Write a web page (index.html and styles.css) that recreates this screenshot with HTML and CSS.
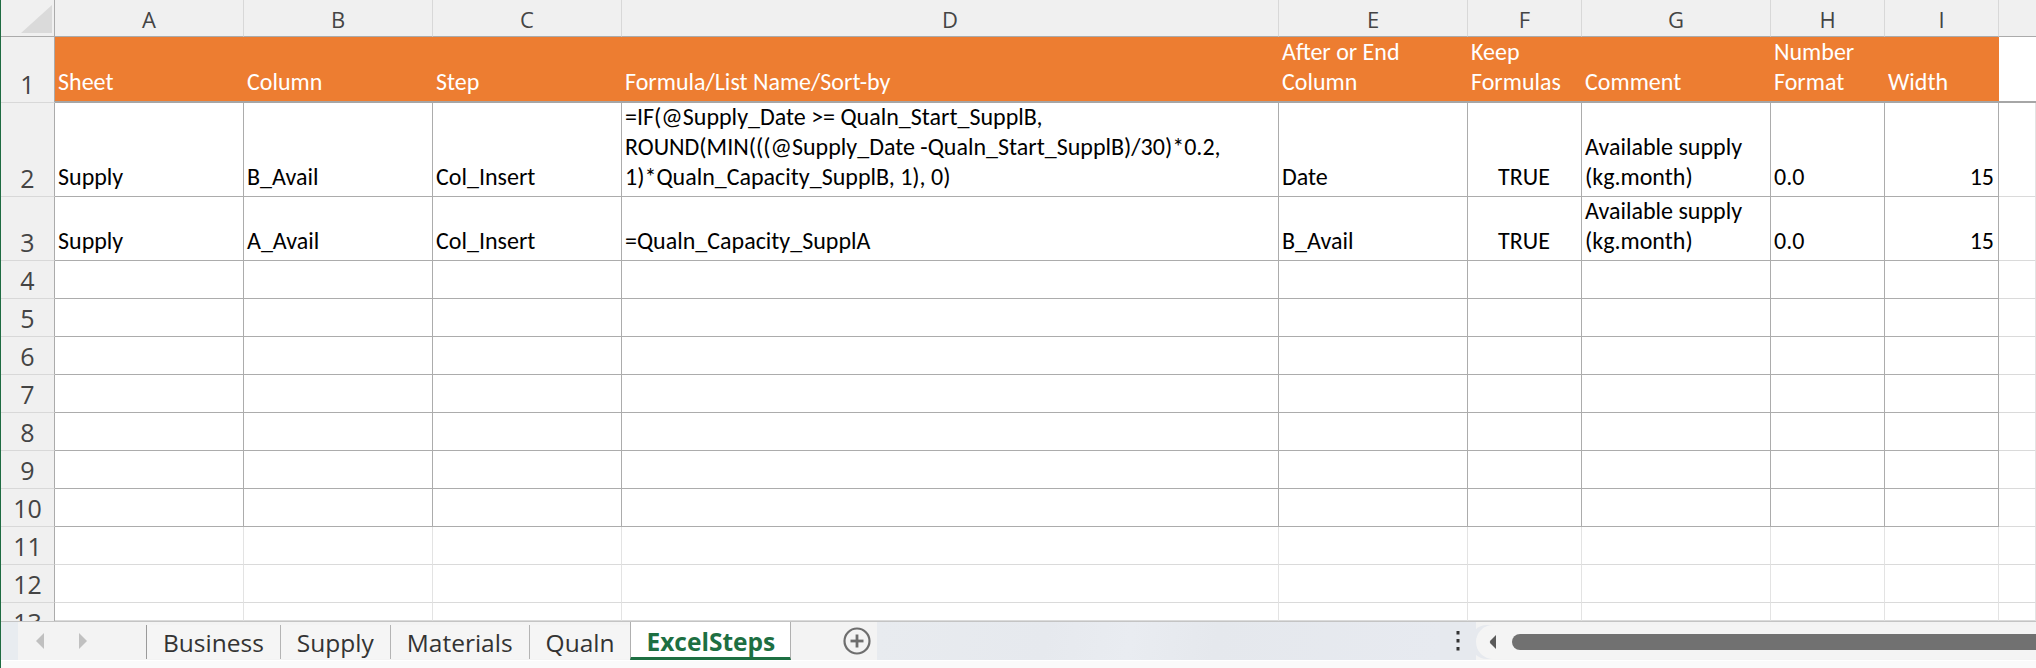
FILE: index.html
```html
<!DOCTYPE html>
<html lang="en">
<head>
<meta charset="utf-8">
<title>ExcelSteps</title>
<link rel="stylesheet" href="styles.css">
</head>
<body>
<div class="app">
  <div class="sheet">
    <!-- column headers -->
    <div class="corner"><span class="tri"></span></div>
    <div class="ch">A</div><div class="ch">B</div><div class="ch">C</div><div class="ch">D</div><div class="ch">E</div><div class="ch">F</div><div class="ch">G</div><div class="ch">H</div><div class="ch">I</div><div class="ch chj"></div>

    <!-- row 1 -->
    <div class="rh">1</div>
    <div class="hd"><div class="tx">Sheet</div></div>
    <div class="hd"><div class="tx">Column</div></div>
    <div class="hd"><div class="tx">Step</div></div>
    <div class="hd"><div class="tx">Formula/List Name/Sort-by</div></div>
    <div class="hd"><div class="tx">After or End<br>Column</div></div>
    <div class="hd"><div class="tx">Keep<br>Formulas</div></div>
    <div class="hd"><div class="tx">Comment</div></div>
    <div class="hd"><div class="tx">Number<br>Format</div></div>
    <div class="hd"><div class="tx">Width</div></div>
    <div class="hdj"></div>

    <!-- row 2 -->
    <div class="rh">2</div>
    <div class="t"><div class="tx">Supply</div></div>
    <div class="t"><div class="tx">B_Avail</div></div>
    <div class="t"><div class="tx">Col_Insert</div></div>
    <div class="t"><div class="tx">=IF(@Supply_Date &gt;= Qualn_Start_SupplB,<br>ROUND(MIN(((@Supply_Date -Qualn_Start_SupplB)/30)*0.2,<br>1)*Qualn_Capacity_SupplB, 1), 0)</div></div>
    <div class="t"><div class="tx">Date</div></div>
    <div class="t ctr"><div class="tx">TRUE</div></div>
    <div class="t"><div class="tx">Available supply<br>(kg.month)</div></div>
    <div class="t"><div class="tx">0.0</div></div>
    <div class="t rt"><div class="tx">15</div></div>
    <div class="g"></div>

    <!-- row 3 -->
    <div class="rh">3</div>
    <div class="t"><div class="tx">Supply</div></div>
    <div class="t"><div class="tx">A_Avail</div></div>
    <div class="t"><div class="tx">Col_Insert</div></div>
    <div class="t"><div class="tx">=Qualn_Capacity_SupplA</div></div>
    <div class="t"><div class="tx">B_Avail</div></div>
    <div class="t ctr"><div class="tx">TRUE</div></div>
    <div class="t"><div class="tx">Available supply<br>(kg.month)</div></div>
    <div class="t"><div class="tx">0.0</div></div>
    <div class="t rt"><div class="tx">15</div></div>
    <div class="g"></div>

    <!-- rows 4-10 -->
    <div class="rh">4</div><div class="t"></div><div class="t"></div><div class="t"></div><div class="t"></div><div class="t"></div><div class="t"></div><div class="t"></div><div class="t"></div><div class="t"></div><div class="g"></div>
    <div class="rh">5</div><div class="t"></div><div class="t"></div><div class="t"></div><div class="t"></div><div class="t"></div><div class="t"></div><div class="t"></div><div class="t"></div><div class="t"></div><div class="g"></div>
    <div class="rh">6</div><div class="t"></div><div class="t"></div><div class="t"></div><div class="t"></div><div class="t"></div><div class="t"></div><div class="t"></div><div class="t"></div><div class="t"></div><div class="g"></div>
    <div class="rh">7</div><div class="t"></div><div class="t"></div><div class="t"></div><div class="t"></div><div class="t"></div><div class="t"></div><div class="t"></div><div class="t"></div><div class="t"></div><div class="g"></div>
    <div class="rh">8</div><div class="t"></div><div class="t"></div><div class="t"></div><div class="t"></div><div class="t"></div><div class="t"></div><div class="t"></div><div class="t"></div><div class="t"></div><div class="g"></div>
    <div class="rh">9</div><div class="t"></div><div class="t"></div><div class="t"></div><div class="t"></div><div class="t"></div><div class="t"></div><div class="t"></div><div class="t"></div><div class="t"></div><div class="g"></div>
    <div class="rh">10</div><div class="t"></div><div class="t"></div><div class="t"></div><div class="t"></div><div class="t"></div><div class="t"></div><div class="t"></div><div class="t"></div><div class="t"></div><div class="g"></div>

    <!-- rows 11-13 -->
    <div class="rh">11</div><div class="g"></div><div class="g"></div><div class="g"></div><div class="g"></div><div class="g"></div><div class="g"></div><div class="g"></div><div class="g"></div><div class="g"></div><div class="g"></div>
    <div class="rh">12</div><div class="g"></div><div class="g"></div><div class="g"></div><div class="g"></div><div class="g"></div><div class="g"></div><div class="g"></div><div class="g"></div><div class="g"></div><div class="g"></div>
    <div class="rh rh-cut"><span>13</span></div><div class="g"></div><div class="g"></div><div class="g"></div><div class="g"></div><div class="g"></div><div class="g"></div><div class="g"></div><div class="g"></div><div class="g"></div><div class="g"></div>
  </div>

  <div class="tabbar">
    <div class="nav">
      <span class="navstrip"></span>
      <svg class="navarrows" width="60" height="16" viewBox="0 0 60 16">
        <polygon points="26,0 26,16 18,8" fill="#c0c0c0"/>
        <polygon points="61,0 61,16 69,8" fill="#c0c0c0"/>
      </svg>
    </div>
    <div class="tabs">
      <div class="tab">Business</div>
      <div class="tab">Supply</div>
      <div class="tab">Materials</div>
      <div class="tab">Qualn</div>
      <div class="tab active">ExcelSteps</div>
    </div>
    <div class="addtab">
      <svg width="28" height="28" viewBox="0 0 28 28">
        <circle cx="14" cy="14" r="12.5" fill="none" stroke="#6e6e6e" stroke-width="2.2"/>
        <line x1="14" y1="7.5" x2="14" y2="20.5" stroke="#6e6e6e" stroke-width="2.8"/>
        <line x1="7.5" y1="14" x2="20.5" y2="14" stroke="#6e6e6e" stroke-width="2.8"/>
      </svg>
    </div>
    <div class="fill"></div>
    <div class="dots">
      <svg width="4" height="20" viewBox="0 0 4 20">
        <rect x="0.5" y="0" width="3" height="3.5" fill="#333"/>
        <rect x="0.5" y="8" width="3" height="3.5" fill="#333"/>
        <rect x="0.5" y="16" width="3" height="3.5" fill="#333"/>
      </svg>
    </div>
    <div class="hscroll">
      <svg class="harrow" width="9" height="16" viewBox="0 0 9 16">
        <path d="M8 1 L8 15 L2.5 9.5 Q1 8 2.5 6.5 Z" fill="#5a5a5a"/>
      </svg>
      <div class="thumb"></div>
    </div>
  </div>
  <div class="bottomstrip"></div>
</div>
</body>
</html>
```

FILE: styles.css
```css
html, body {
  margin: 0;
  padding: 0;
  background: #ffffff;
  overflow: hidden;
}

.app {
  width: 2036px;
  height: 668px;
  box-sizing: border-box;
  border-left: 1px solid #1e6b41;
  display: flex;
  flex-direction: column;
  overflow: hidden;
}

.sheet {
  display: grid;
  grid-template-columns: 54px 189px 189px 189px 657px 189px 114px 189px 114px 114px 1fr;
  grid-template-rows: 37px 66px 94px 64px repeat(9, 38px) 18px;
  font-family: "Carlito", "Lato", "Liberation Sans", sans-serif;
  font-size: 24px;
  color: #000;
}

.sheet > div {
  box-sizing: border-box;
  overflow: hidden;
  min-width: 0;
}

.corner {
  background: #f0f0f0;
  border-right: 1px solid #ababab;
  border-bottom: 1px solid #ababab;
  position: relative;
}
.corner .tri {
  position: absolute;
  left: 20px;
  top: 5px;
  width: 31px;
  height: 28px;
  background: #dadada;
  clip-path: polygon(100% 0, 100% 100%, 0 100%);
}

.ch {
  background: #f0f0f0;
  border-right: 1px solid #d8d8d8;
  border-bottom: 1px solid #ababab;
  text-align: center;
  font-family: "Open Sans", "Noto Sans", sans-serif;
  font-size: 22px;
  line-height: 34px;
  padding-top: 2px;
  color: #444;
}
.chj { border-right: none; }

.rh {
  background: #f0f0f0;
  border-right: 1px solid #ababab;
  border-bottom: 1px solid #d8d8d8;
  display: flex;
  align-items: flex-end;
  justify-content: center;
  font-family: "Open Sans", "Noto Sans", sans-serif;
  font-size: 25px;
  line-height: 34px;
  color: #444;
  padding-bottom: 1px;
}
.rh-cut {
  align-items: flex-start;
  border-bottom: none;
}
.rh-cut span {
  display: block;
  margin-top: 2px;
}

.hd, .t, .g, .hdj {
  display: flex;
  flex-direction: column;
  justify-content: flex-end;
  padding: 0 4px 4px 3px;
}

.sheet > .hd, .sheet > .t {
  overflow: visible;
}

.tx {
  line-height: 30px;
  white-space: nowrap;
}

.hd {
  background: #ed7d31;
  color: #ffffff;
  border-bottom: 2px solid #a6a6a6;
}
.hdj {
  background: #ffffff;
  border-bottom: 2px solid #a6a6a6;
}

.t {
  border-right: 1px solid #acacac;
  border-bottom: 1px solid #acacac;
}

.g {
  border-right: 1px solid #e3e3e3;
  border-bottom: 1px solid #dadada;
}

.ctr { text-align: center; }
.rt { text-align: right; }

/* ---------- sheet tab bar ---------- */
.tabbar {
  height: 39px;
  box-sizing: border-box;
  border-top: 1px solid #c4c4c4;
  display: flex;
  background: #f3f3f3;
  font-family: "Open Sans", "Noto Sans", sans-serif;
}

.nav {
  width: 145px;
  display: flex;
  align-items: center;
}
.navstrip {
  width: 17px;
  align-self: stretch;
  background: #e8ecf0;
}
.navarrows {
  overflow: visible;
}

.tabs {
  display: flex;
}
.tab {
  border-left: 1px solid #b4b4b4;
  margin-top: 3px;
  margin-bottom: 1px;
  padding: 0 16px 0 16px;
  display: flex;
  align-items: center;
  font-size: 24.5px;
  color: #333;
  background: #f5f5f5;
}
.tab:first-child {
  border-left-color: #9a9a9a;
}
.tab.active {
  background: #ffffff;
  color: #1d6f42;
  font-weight: 700;
  margin-top: 0;
  margin-bottom: 0;
  border-left-color: #b0b0b0;
  border-right: 1px solid #b0b0b0;
  border-bottom: 3px solid #1d6f42;
  padding-top: 3px;
  padding-left: 15px;
  padding-right: 15px;
}

.addtab {
  width: 86px;
  display: flex;
  align-items: center;
  padding-left: 52px;
  box-sizing: border-box;
}

.fill {
  flex: 1;
  background: linear-gradient(100deg, #e8ebef 0%, #e6e9ee 30%, #e9ecf1 45%, #e5e8ed 60%, #e7eaf0 100%);
}

.dots {
  width: 36px;
  display: flex;
  align-items: center;
  justify-content: center;
  background: #e6e9ee;
}

.hscroll {
  width: 560px;
  height: 34px;
  margin-top: 3px;
  border-radius: 17px 0 0 17px;
  background: #f4f4f4;
  display: flex;
  align-items: center;
  padding-left: 12px;
  box-sizing: border-box;
  box-shadow: -6px 0 0 #e6e9ee;
}
.harrow { flex: none; }
.thumb {
  flex: 1;
  height: 16px;
  margin-left: 15px;
  border-radius: 8px 0 0 8px;
  background: #717171;
}

.bottomstrip {
  flex: 1;
  background: #fafafa;
  border-top: 1px solid #ffffff;
}
```
